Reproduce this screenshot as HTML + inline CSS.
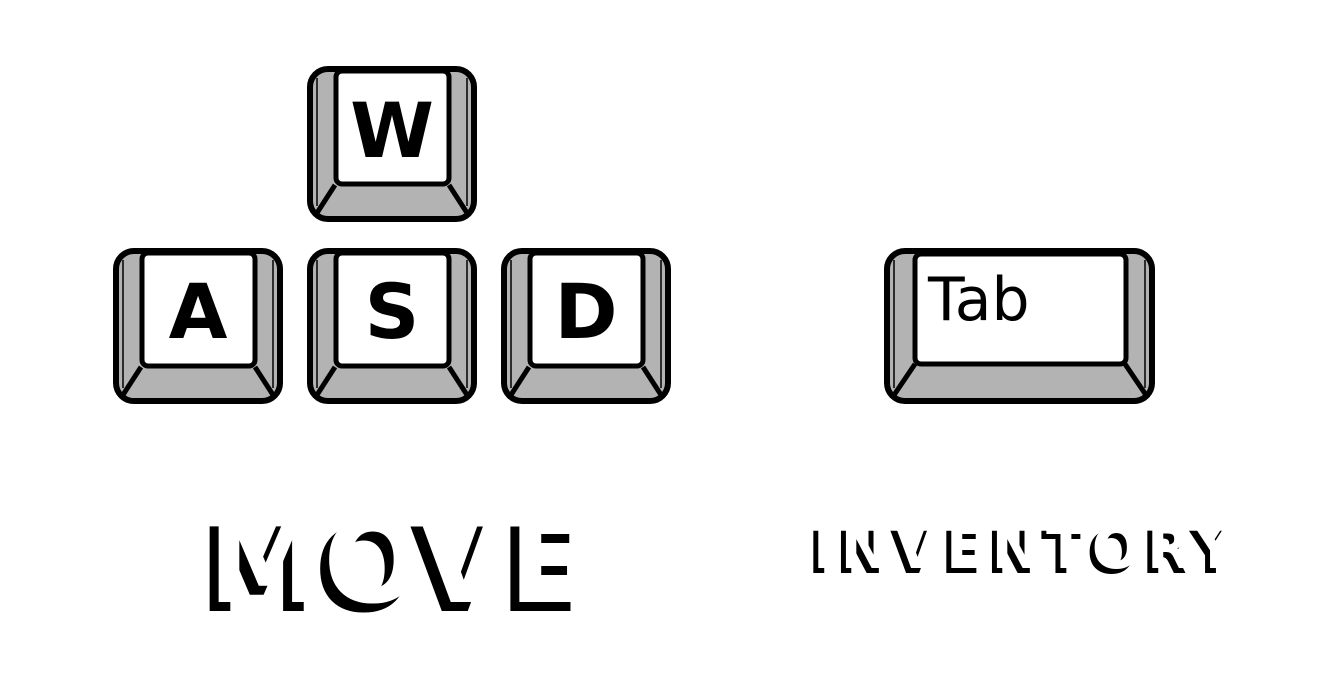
<!DOCTYPE html>
<html><head><meta charset="utf-8"><style>
body{margin:0;width:1341px;height:680px;background:#fff;overflow:hidden;position:relative;font-family:"DejaVu Sans","Liberation Sans",sans-serif}
svg{position:absolute;left:0;top:0}
.t{position:absolute;color:#fff;font-weight:bold;white-space:nowrap;line-height:1}
</style></head><body>
<svg width="1341" height="680" viewBox="0 0 1341 680">
<defs>
<g id="k">
<rect x="3" y="3" width="164" height="150" rx="18" fill="#b3b3b3" stroke="#000" stroke-width="6"/>
<line x1="10" y1="12" x2="10" y2="140" stroke="#000" stroke-width="1.5"/>
<line x1="160" y1="12" x2="160" y2="140" stroke="#000" stroke-width="1.5"/>
<path d="M28 119 L8 150 M142 119 L162 150" stroke="#000" stroke-width="5" fill="none"/>
<rect x="29" y="5" width="113" height="113" rx="6" fill="#fff" stroke="#000" stroke-width="5"/>
</g>
</defs>
<use href="#k" x="307" y="66"/>
<use href="#k" x="113" y="248"/>
<use href="#k" x="307" y="248"/>
<use href="#k" x="501" y="248"/>
<g transform="translate(884,248)">
<rect x="3" y="3" width="265" height="150" rx="18" fill="#b3b3b3" stroke="#000" stroke-width="6"/>
<line x1="10" y1="12" x2="10" y2="140" stroke="#000" stroke-width="1.5"/>
<line x1="261" y1="12" x2="261" y2="140" stroke="#000" stroke-width="1.5"/>
<path d="M31 116 L8 150 M241 116 L264 150" stroke="#000" stroke-width="5" fill="none"/>
<rect x="31" y="6" width="211" height="110" rx="6" fill="#fff" stroke="#000" stroke-width="5"/>
</g>
<g font-family="DejaVu Sans, sans-serif" font-weight="bold" font-size="76" text-anchor="middle" fill="#000">
<text x="392" y="157">W</text>
<text x="198" y="338">A</text>
<text x="392" y="338">S</text>
<text x="586" y="338">D</text>
</g>
<text x="928" y="320" font-family="DejaVu Sans, sans-serif" font-size="60" fill="#000">Tab</text>
</svg>
<div class="t" style="left:208px;top:505px;font-size:116px;letter-spacing:0px;text-shadow:-9px 9px 0 #000">MOVE</div>
<div class="t" style="left:813px;top:519px;font-size:58px;letter-spacing:6px;text-shadow:-5px 5px 0 #000">INVENTORY</div>
</body></html>
